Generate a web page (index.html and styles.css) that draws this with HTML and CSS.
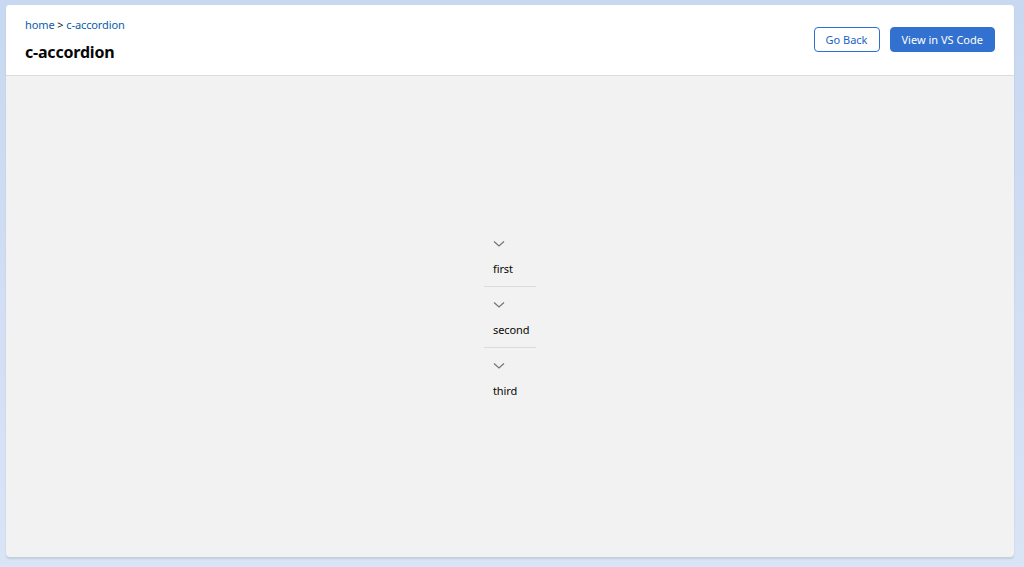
FILE: index.html
```html
<!DOCTYPE html>
<html lang="en">
  <head>
    <meta charset="UTF-8" />
    <meta name="viewport" content="width=device-width, initial-scale=1.0" />
    <title>c-accordion</title>
    <link rel="stylesheet" href="styles.css">
  </head>
  <body>
    <div class="card">
      <!-- Header -->
      <div class="header">
        <div class="heading">
          <div class="breadcrumb">
            <a href="#">home</a> &gt; <a href="#">c-accordion</a>
          </div>
          <h1>c-accordion</h1>
        </div>
        <div class="actions">
          <button class="outline">Go Back</button>
          <button class="brand">View in VS Code</button>
        </div>
      </div>

      <!-- Preview -->
      <div class="preview">
        <ul class="accordion">
          <li class="section">
            <svg class="chevron" viewBox="0 0 12 12"><path d="M1 3.5 L6 8 L11 3.5" /></svg>
            <span>first</span>
          </li>
          <li class="section">
            <svg class="chevron" viewBox="0 0 12 12"><path d="M1 3.5 L6 8 L11 3.5" /></svg>
            <span>second</span>
          </li>
          <li class="section">
            <svg class="chevron" viewBox="0 0 12 12"><path d="M1 3.5 L6 8 L11 3.5" /></svg>
            <span>third</span>
          </li>
        </ul>
      </div>
    </div>
  </body>
</html>
```

FILE: styles.css
```css
* {
  box-sizing: border-box;
}

html,
body {
  height: 100%;
}

body {
  margin: 0;
  padding: 5px 10px 10px 6px;
  font-family: "Noto Sans", "Open Sans", sans-serif;
  color: #080707;
  background: linear-gradient(180deg, #c8d8f1 0%, #d9e4f6 100%);
}

.card {
  height: 100%;
  display: flex;
  flex-direction: column;
  background: #f2f2f2;
  border-radius: 4px;
  box-shadow: 0 2px 2px rgba(0, 0, 0, 0.1);
  overflow: hidden;
}

.header {
  height: 71px;
  display: flex;
  justify-content: space-between;
  align-items: center;
  padding: 0 19px;
  background: #fff;
  border-bottom: 1px solid #dddbda;
}

.breadcrumb {
  font-size: 11px;
  line-height: 16px;
  color: #181818;
  letter-spacing: -0.1px;
}

.breadcrumb a {
  color: #0b5cab;
  text-decoration: none;
}

h1 {
  margin: 8px 0 0;
  font-size: 16px;
  line-height: 22px;
  font-weight: 700;
  letter-spacing: -0.2px;
}

.actions {
  display: flex;
  gap: 10px;
  margin-bottom: 2px;
}

.actions button {
  height: 25px;
  padding: 0 11px;
  font-family: inherit;
  font-size: 11px;
  border-radius: 4px;
  cursor: pointer;
}

.actions .outline {
  background: #fff;
  color: #1b64c4;
  border: 1px solid #2f6fd0;
}

.actions .brand {
  background: #3271cf;
  color: #fff;
  border: 1px solid #3271cf;
}

.preview {
  flex: 1;
  display: flex;
  align-items: center;
  justify-content: center;
}

.accordion {
  list-style: none;
  margin: 1px 0 0;
  padding: 0;
  width: 52px;
}

.section {
  display: flex;
  flex-direction: column;
  align-items: flex-start;
  padding: 12px 0 9px 9px;
  font-size: 11px;
  line-height: 16px;
  letter-spacing: -0.1px;
  border-bottom: 1px solid #dddbda;
}

.section:last-child {
  border-bottom: none;
}

.chevron {
  width: 12px;
  height: 12px;
  margin-bottom: 11px;
  fill: none;
  stroke: #747474;
  stroke-width: 1.2;
}
```
